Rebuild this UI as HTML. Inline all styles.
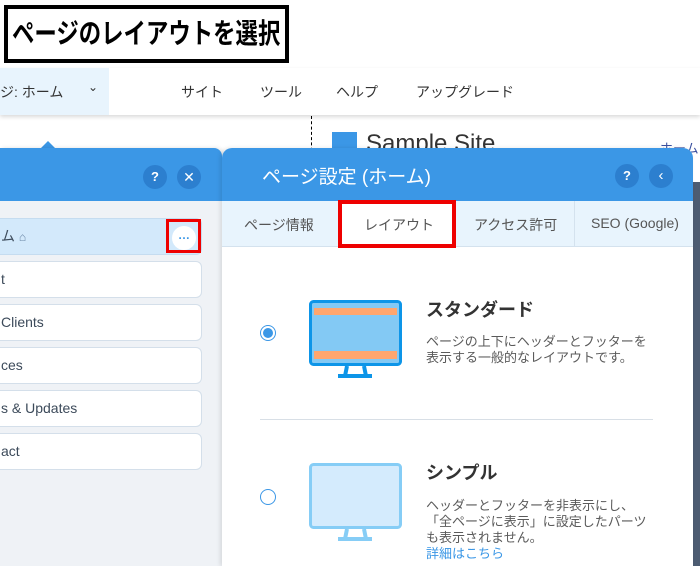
<!DOCTYPE html>
<html><head><meta charset="utf-8"><style>
*{margin:0;padding:0;box-sizing:border-box}
body{width:700px;height:566px;overflow:hidden;background:#fff;position:relative;font-family:"Liberation Sans","Noto Sans CJK JP",sans-serif;color:#333}
.a{position:absolute}
.circ{position:absolute;width:24px;height:24px;border-radius:50%;background:#2c7fcf;color:#fff;font-size:13px;font-weight:bold;text-align:center;line-height:24px}
.item{position:absolute;left:-10px;width:212px;height:37px;background:#fff;border:1px solid #d4dfea;border-radius:6px;font-size:14px;color:#3c4a5a;line-height:35px;padding-left:10px}
.desc{font-size:13px;color:#5a5a5a;line-height:16px}
</style></head><body>
<div class="a" style="left:4px;top:5px;width:285px;height:58px;border:4px solid #000;"></div>
<div class="a" style="left:12px;top:9px;font-size:28px;font-weight:bold;color:#000;line-height:50px;white-space:nowrap;transform:scaleX(0.8);transform-origin:0 0">ページのレイアウトを選択</div>

<div class="a" style="left:0;top:68px;width:700px;height:47px;background:#fff;box-shadow:0 2px 4px rgba(0,0,0,.15)"></div>
<div class="a" style="left:0;top:68px;width:109px;height:47px;background:#e8f4fd"></div>
<div class="a" style="left:0;top:82px;font-size:14px;color:#333">ジ: ホーム</div>
<div class="a" style="left:88px;top:80px;font-size:12px;color:#333">⌄</div>
<div class="a" style="left:181px;top:82px;font-size:14px;color:#333">サイト</div>
<div class="a" style="left:260px;top:82px;font-size:14px;color:#333">ツール</div>
<div class="a" style="left:336px;top:82px;font-size:14px;color:#333">ヘルプ</div>
<div class="a" style="left:416px;top:82px;font-size:14px;color:#333">アップグレード</div>

<div class="a" style="left:311px;top:116px;height:40px;border-left:1px dashed #000"></div>
<div class="a" style="left:332px;top:132px;width:25px;height:20px;background:#3b97e6"></div>
<div class="a" style="left:366px;top:130px;font-size:24px;color:#333">Sample Site</div>
<div class="a" style="left:660px;top:138px;font-size:13px;color:#3a50a0">ホーム</div>

<div class="a" style="left:40px;top:141px;width:0;height:0;border-left:8px solid transparent;border-right:8px solid transparent;border-bottom:8px solid #3b97e6"></div>
<div class="a" style="left:0;top:148px;width:222px;height:418px;background:#eff2f6;border-radius:0 8px 0 0;overflow:hidden;box-shadow:2px 0 4px rgba(0,0,0,.12)">
 <div class="a" style="left:0;top:0;width:222px;height:53px;background:#3b97e6"></div>
</div>
<div class="circ" style="left:143px;top:165px">?</div>
<div class="circ" style="left:177px;top:165px;font-weight:normal;font-size:14px">✕</div>
<div class="item" style="top:218px;background:#d3e9fb;border-color:#c5dcf0">ム <span style="font-size:12px;color:#6a86a6">⌂</span></div>
<div class="a" style="left:172px;top:226px;width:24px;height:24px;border-radius:50%;background:#fff;color:#3b97e6;font-size:12px;text-align:center;line-height:18px;font-weight:bold">…</div>
<div class="a" style="left:166px;top:219px;width:35px;height:34px;border:3px solid #e00"></div>
<div class="item" style="top:261px">t</div>
<div class="item" style="top:304px">Clients</div>
<div class="item" style="top:347px">ces</div>
<div class="item" style="top:390px">s &amp; Updates</div>
<div class="item" style="top:433px">act</div>

<div class="a" style="left:690px;top:182px;width:10px;height:384px;background:#4d5c72"></div>

<div class="a" style="left:222px;top:148px;width:471px;height:418px;background:#fff;border-radius:10px 10px 0 0;overflow:hidden;box-shadow:-2px 0 4px rgba(0,0,0,.1)">
 <div class="a" style="left:0;top:0;width:471px;height:53px;background:#3b97e6"></div>
 <div class="a" style="left:0;top:53px;width:471px;height:46px;background:#e8f4fd;border-bottom:1px solid #d4e2ee"></div>
 <div class="a" style="left:232px;top:53px;height:46px;border-left:1px solid #d4e2ee"></div>
 <div class="a" style="left:352px;top:53px;height:46px;border-left:1px solid #d4e2ee"></div>
</div>
<div class="a" style="left:262px;top:162px;font-size:19px;color:#fff">ページ設定 (ホーム)</div>
<div class="circ" style="left:615px;top:164px">?</div>
<div class="circ" style="left:649px;top:164px;font-weight:normal;font-size:15px">‹</div>
<div class="a" style="left:244px;top:215px;font-size:14px;color:#555">ページ情報</div>
<div class="a" style="left:338px;top:200px;width:118px;height:48px;background:#fff;border:4px solid #e00"></div>
<div class="a" style="left:364px;top:215px;font-size:14px;color:#555">レイアウト</div>
<div class="a" style="left:474px;top:215px;font-size:14px;color:#555">アクセス許可</div>
<div class="a" style="left:591px;top:215px;font-size:14px;color:#555">SEO (Google)</div>

<div class="a" style="left:260px;top:325px;width:16px;height:16px;border-radius:50%;border:1px solid #3b97e6;padding:2px"><div style="width:10px;height:10px;border-radius:50%;background:#3b97e6"></div></div>
<svg class="a" style="left:309px;top:300px" width="93" height="78">
 <rect x="1.5" y="1.5" width="90" height="63" rx="3" fill="#83c9f4" stroke="#0d95e8" stroke-width="3"/>
 <rect x="5" y="8" width="83" height="7" fill="#ffa66e"/>
 <rect x="5" y="51" width="83" height="8" fill="#ffa66e"/>
 <path d="M38 66 L36 76 M55 66 L57 76" stroke="#0d95e8" stroke-width="4"/>
 <rect x="29" y="74" width="34" height="4" fill="#0d95e8"/>
</svg>
<div class="a" style="left:426px;top:296px;font-size:18px;font-weight:bold;color:#333">スタンダード</div>
<div class="a desc" style="left:426px;top:334px">ページの上下にヘッダーとフッターを<br>表示する一般的なレイアウトです。</div>
<div class="a" style="left:260px;top:419px;width:393px;border-top:1px solid #d8dfe6"></div>

<div class="a" style="left:260px;top:489px;width:16px;height:16px;border-radius:50%;border:1px solid #3b97e6"></div>
<svg class="a" style="left:309px;top:463px" width="93" height="78">
 <rect x="1.5" y="1.5" width="90" height="63" rx="3" fill="#d4ebfd" stroke="#86cdf6" stroke-width="3"/>
 <path d="M38 66 L36 76 M55 66 L57 76" stroke="#86cdf6" stroke-width="4"/>
 <rect x="29" y="74" width="34" height="4" fill="#86cdf6"/>
</svg>
<div class="a" style="left:426px;top:459px;font-size:18px;font-weight:bold;color:#333">シンプル</div>
<div class="a desc" style="left:426px;top:498px">ヘッダーとフッターを非表示にし、<br>「全ページに表示」に設定したパーツ<br>も表示されません。<br><span style="color:#3b97e6">詳細はこちら</span></div>
</body></html>
